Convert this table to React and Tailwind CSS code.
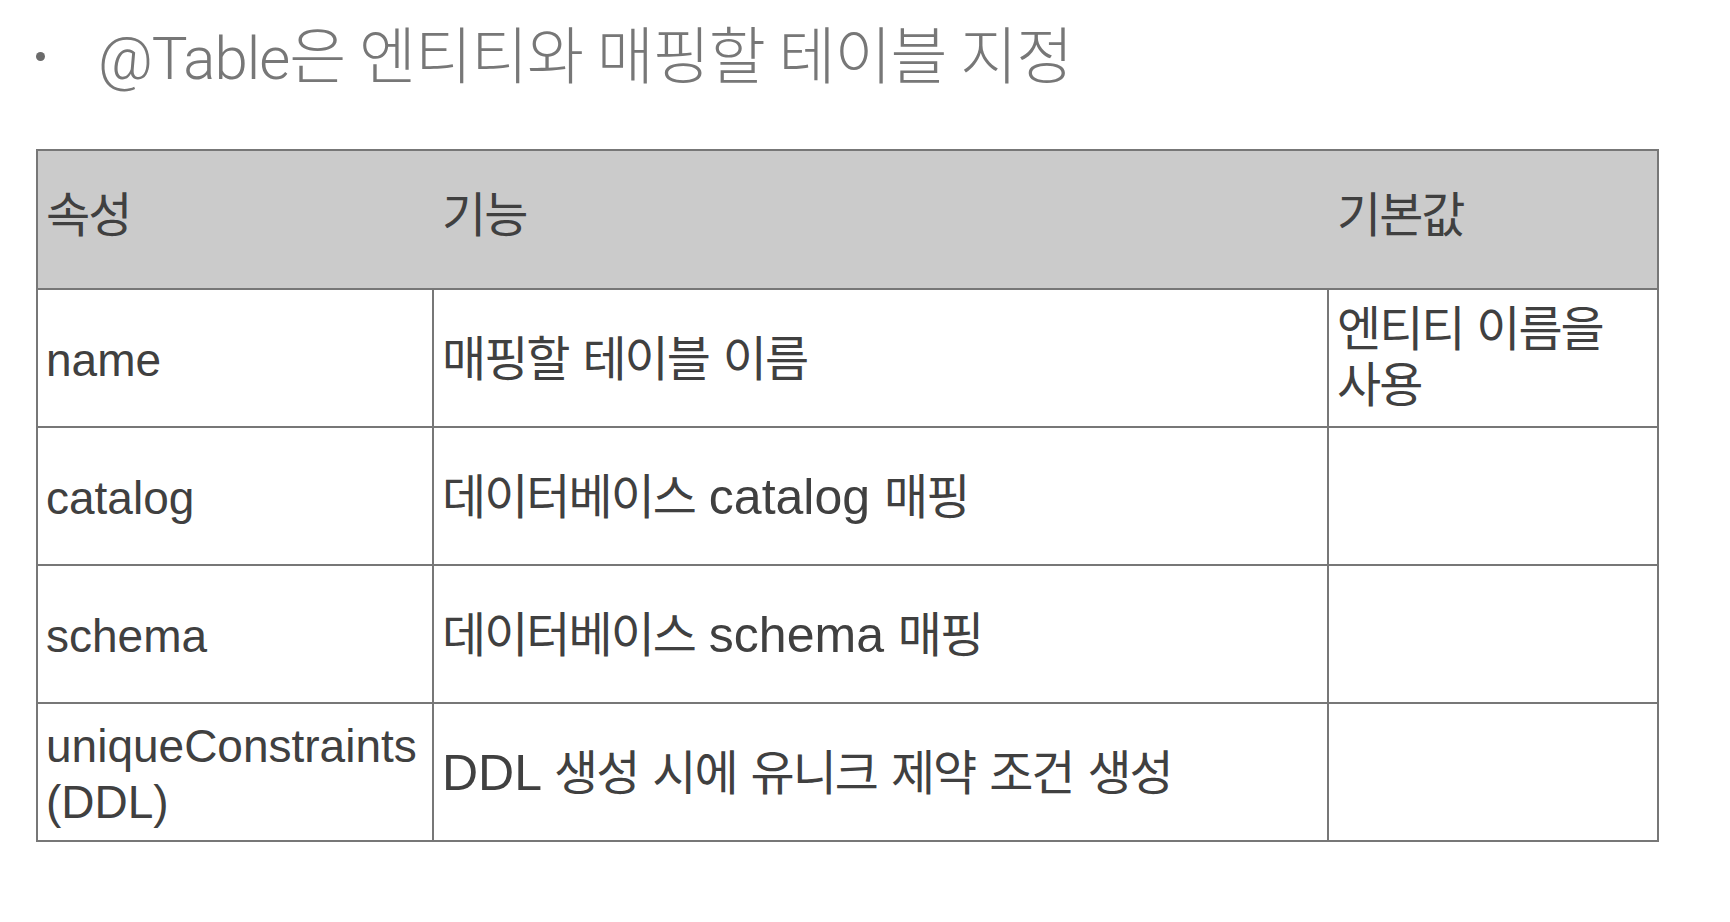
import React from "react";

const HANGUL = /[\uAC00-\uD7A3]/;

function Mixed({ text, kClass, lClass }) {
  const parts = text.split(/([\uAC00-\uD7A3]+)/).filter((p) => p.length > 0);
  return (
    <>
      {parts.map((p, i) =>
        HANGUL.test(p) ? (
          <span key={i} className={kClass}>
            {p}
          </span>
        ) : (
          <span key={i} className={lClass}>
            {p}
          </span>
        )
      )}
    </>
  );
}

const rows = [
  { a: "name", b: "매핑할 테이블 이름", c: "엔티티 이름을 사용" },
  { a: "catalog", b: "데이터베이스 catalog 매핑", c: "" },
  { a: "schema", b: "데이터베이스 schema 매핑", c: "" },
  { a: "uniqueConstraints (DDL)", b: "DDL 생성 시에 유니크 제약 조건 생성", c: "" },
];

const K = "text-[48px] tracking-[-2px]";

export default function App() {
  return (
    <div className="min-h-screen w-full bg-white font-[family-name:'Liberation_Sans','Noto_Sans_CJK_KR',sans-serif]">
      {/* Title */}
      <div className="flex items-center pl-[36px] pt-[24px] h-[86px]">
        <span className="block w-[9px] h-[9px] rounded-full bg-[#6b6b6b] mt-[2px]" />
        <h1 className="ml-[53px] text-[60px] leading-[64px] text-[#777777] font-normal whitespace-nowrap">
          <Mixed
            text="@Table은 엔티티와 매핑할 테이블 지정"
            kClass="text-[62px] tracking-[-1px] font-light font-[family-name:'Noto_Sans_CJK_KR',sans-serif]"
            lClass="font-light tracking-[-1px] font-[family-name:'Roboto','Liberation_Sans',sans-serif]"
          />
        </h1>
      </div>

      {/* Table */}
      <div className="ml-[36px] mt-[63px] w-[1623px] border-2 border-[#777777] text-[46px] leading-[56px] text-[#404040]">
        <div className="grid grid-cols-[394px_895px_1fr] h-[137px] bg-[#cbcbcb]">
          <div className="flex items-center pl-[8px] pb-[8px]">
            <Mixed text="속성" kClass={K} />
          </div>
          <div className="flex items-center pl-[10px] pb-[8px]">
            <Mixed text="기능" kClass={K} />
          </div>
          <div className="flex items-center pl-[10px] pb-[8px]">
            <Mixed text="기본값" kClass={K} />
          </div>
        </div>
        {rows.map((r, i) => (
          <div
            key={i}
            className="grid grid-cols-[394px_895px_1fr] h-[138px] border-t-2 border-[#777777]"
          >
            <div className="flex items-center pl-[8px] pt-[4px]">
              <div>
                <Mixed text={r.a} kClass={K} />
              </div>
            </div>
            <div className="flex items-center pl-[8px] pt-[2px] border-l-2 border-[#777777]">
              <div className="break-keep">
                <Mixed text={r.b} kClass={K} lClass="text-[50px]" />
              </div>
            </div>
            <div className="flex items-center pl-[8px] pr-[4px] border-l-2 border-[#777777]">
              <div className="break-keep">
                <Mixed text={r.c} kClass={K} />
              </div>
            </div>
          </div>
        ))}
      </div>
    </div>
  );
}
